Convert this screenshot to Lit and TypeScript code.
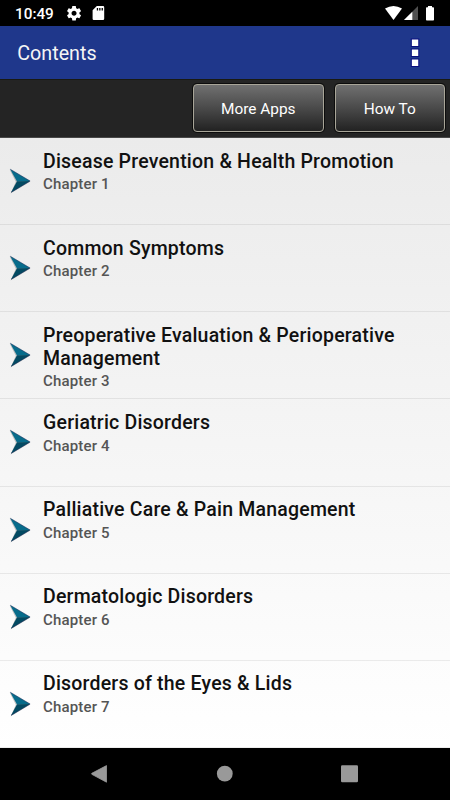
import { LitElement, html, css } from "lit";
import { customElement, property } from "lit/decorators.js";

const chapters: string[][] = [
  ["Disease Prevention & Health Promotion"],
  ["Common Symptoms"],
  ["Preoperative Evaluation & Perioperative", "Management"],
  ["Geriatric Disorders"],
  ["Palliative Care & Pain Management"],
  ["Dermatologic Disorders"],
  ["Disorders of the Eyes & Lids"],
];

@customElement("chapter-row")
class ChapterRow extends LitElement {
  @property({ attribute: false }) lines: string[] = [];
  @property({ type: Number }) number = 0;

  static styles = css`
    :host {
      display: flex;
      flex: 1 1 0;
      min-height: 0;
      box-sizing: border-box;
      border-bottom: 1px solid rgba(0, 0, 0, 0.07);
    }
    .arrow {
      flex: none;
      width: 24px;
      height: 28px;
      margin: 29px 10px 0 9px;
    }
    .title {
      padding-top: 11.6px;
      font-size: 19.5px;
      letter-spacing: 0.2px;
      line-height: 23px;
      font-weight: 500;
      color: #111;
      white-space: nowrap;
    }
    .sub {
      font-size: 15px;
      letter-spacing: 0.16px;
      line-height: 18px;
      margin-top: 2.6px;
      font-weight: 500;
      color: #555;
    }
  `;

  render() {
    return html`
      <svg class="arrow" viewBox="0 0 24 28">
        <path d="M.6 2.6 L21 14.800 L1.500 26.400 L6.800 14.800Z" fill="#000" opacity=".22" />
        <path d="M1.200 2.200 L21.100 14 L8 14.600Z" fill="#076c8b" />
        <path d="M8 14.300 L21.100 14 L2 25.400Z" fill="#034a62" />
        <path d="M1.200 2.200 L21.100 14 L2 25.400" fill="none" stroke="#0b2350" stroke-opacity=".75" stroke-width=".7" />
      </svg>
      <div>
        <div class="title">${this.lines.map((l) => html`<div>${l}</div>`)}</div>
        <div class="sub">Chapter ${this.number}</div>
      </div>
    `;
  }
}

@customElement("app-root")
class AppRoot extends LitElement {
  static styles = css`
    :host {
      display: flex;
      flex-direction: column;
      width: 450px;
      height: 800px;
      overflow: hidden;
      background: #000;
      font-family: Roboto, sans-serif;
    }
    .status {
      height: 26px;
      flex: none;
      display: flex;
      color: #fff;
    }
    .time {
      width: 51px;
      padding-left: 15px;
      font-size: 15.3px;
      line-height: 28px;
      font-weight: 500;
    }
    .status svg {
      display: block;
      flex: none;
    }
    .gap {
      flex: 1;
    }
    .bar {
      height: 53px;
      flex: none;
      display: flex;
      align-items: center;
      justify-content: space-between;
      background: #1f378b;
      color: #f5f5f5;
      font-size: 19.7px;
      line-height: 24px;
      padding: 0 30px 0 17.3px;
      box-sizing: border-box;
    }
    .bar span {
      padding-top: 2px;
    }
    .tools {
      height: 59px;
      flex: none;
      box-sizing: border-box;
      display: flex;
      justify-content: flex-end;
      gap: 11px;
      padding: 4px 5.5px 0 0;
      background: #242424;
      border-top: 1px solid #1a1a12;
      border-bottom: 1px solid #484848;
    }
    .btn {
      box-sizing: border-box;
      height: 48px;
      border: 1px solid #a8a598;
      border-radius: 4px;
      box-shadow: 0 0 0 1px #0c0c0c;
      background: linear-gradient(#707070, #4a4a4a 50%, #222);
      color: #fff;
      font-size: 15.4px;
      line-height: 48px;
      text-align: center;
    }
    .more {
      width: 131.5px;
    }
    .how {
      width: 109.5px;
    }
    .list {
      height: 610px;
      flex: none;
      display: flex;
      flex-direction: column;
      background: linear-gradient(#ebebeb, #fff);
    }
    .nav {
      flex: 1;
    }
    .nav svg {
      display: block;
    }
  `;

  render() {
    return html`
      <div class="status">
        <div class="time">10:49</div>
        <svg width="39" height="26" viewBox="66 0 39 26" fill="#fff">
          <g transform="translate(65.4 4.6) scale(.72)">
            <path
              d="M19.43 12.98c.04-.32.07-.64.07-.98s-.03-.66-.07-.98l2.11-1.65c.19-.15.24-.42.12-.64l-2-3.46c-.12-.22-.39-.3-.61-.22l-2.49 1c-.52-.4-1.08-.73-1.69-.98l-.38-2.65C14.46 2.18 14.25 2 14 2h-4c-.25 0-.46.18-.49.42l-.38 2.65c-.61.25-1.17.59-1.69.98l-2.49-1c-.23-.09-.49 0-.61.22l-2 3.46c-.13.22-.07.49.12.64l2.11 1.65c-.04.32-.07.65-.07.98s.03.66.07.98l-2.11 1.65c-.19.15-.24.42-.12.64l2 3.46c.12.22.39.3.61.22l2.49-1c.52.4 1.08.73 1.69.98l.38 2.65c.03.24.24.42.49.42h4c.25 0 .46-.18.49-.42l.38-2.65c.61-.25 1.17-.59 1.69-.98l2.49 1c.23.09.49 0 .61-.22l2-3.46c.12-.22.07-.49-.12-.64l-2.11-1.65zM12 15.500c-1.930 0-3.500-1.570-3.500-3.500s1.570-3.500 3.500-3.500 3.500 1.570 3.500 3.500-1.570 3.500-3.500 3.500z"
            />
          </g>
          <path
            fill-rule="evenodd"
            d="M96.800 6H103a1.200 1.200 0 0 1 1.200 1.200V18.800A1.200 1.200 0 0 1 103 20H93.800A1.200 1.200 0 0 1 92.600 18.800V10.200ZM96.800 8v2.600h1.300V8ZM99.200 8v2.600h1.300V8ZM101.600 8v2.600h1.300V8Z"
          />
        </svg>
        <div class="gap"></div>
        <svg width="70" height="26" viewBox="380 0 70 26" fill="#fff">
          <path d="M385 8.600Q393.500 3.400 402 8.600L393.500 20Z" />
          <path d="M418 6V20H404Z" fill="#505050" />
          <path d="M412.300 11.700V20H404Z" />
          <path d="M428 6h4v1.300h1.200q.8 0 .8.800V19.700q0 .8-.8.800H426.800q-.8 0-.8-.8V8.100q0-.8.800-.8H428Z" />
        </svg>
      </div>
      <div class="bar">
        <span>Contents</span>
        <svg width="10" height="30" viewBox="0 0 10 30">
          <g fill="#fff" stroke="#0a0f80" stroke-width="1">
            <rect x="1.300" y="1" width="7.500" height="7.500" />
            <rect x="1.300" y="11" width="7.500" height="7.500" />
            <rect x="1.300" y="21" width="7.500" height="7.500" />
          </g>
        </svg>
      </div>
      <div class="tools">
        <div class="btn more">More Apps</div>
        <div class="btn how">How To</div>
      </div>
      <div class="list">
        ${chapters.map((c, i) => html`<chapter-row .lines=${c} .number=${i + 1}></chapter-row>`)}
      </div>
      <div class="nav">
        <svg width="450" height="52" viewBox="0 748 450 52" fill="#999">
          <path d="M106.500 765.600V782.200L91.800 774.300q-.6-.5 0-1Z" stroke="#999" stroke-width=".8" stroke-linejoin="round" />
          <circle cx="224.800" cy="773.700" r="7.900" />
          <rect x="341" y="765.300" width="17" height="17" rx="1.200" />
        </svg>
      </div>
    `;
  }
}
